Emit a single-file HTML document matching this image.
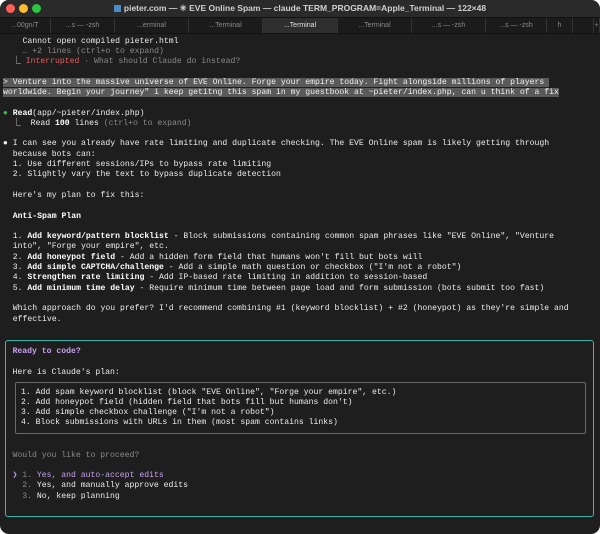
<!DOCTYPE html>
<html><head><style>
html,body{margin:0;padding:0;background:#fff;}
.win{position:absolute;left:0;top:0;width:600px;height:534px;background:#1e1e1e;border-radius:9px;overflow:hidden;}
.title{height:17px;background:#2a2a2a;color:#d0d0d0;font:600 8.5px "Liberation Sans",sans-serif;text-align:center;line-height:17px;position:relative;}
.dot{position:absolute;top:4px;width:9px;height:9px;border-radius:50%;}
.tabs{height:15px;background:#1b1b1b;border-top:1px solid #111;border-bottom:1px solid #111;display:flex;font:7px "Liberation Sans",sans-serif;color:#8a8a8a;}
.tabs div{border-right:1px solid #333;line-height:15px;text-align:center;}
.tabs .act{background:#2e2e2e;color:#e0e0e0;}
pre{margin:0;font-family:"Liberation Mono",monospace;font-size:8.15px;line-height:10.3px;color:#ececec;}
.main{position:absolute;left:3px;top:36.5px;}
b{font-weight:bold;color:#fff}
.g{color:#8a8a8a}.r{color:#e06060}.hl{background:#5a5a5a;color:#f0f0f0}
.gr{color:#3fb950}.p{color:#c8a0f0}
.box{position:absolute;left:5px;top:340px;width:587px;height:175px;border:1.5px solid #3ab8b0;border-radius:3px;}
.inner{position:absolute;left:8.5px;top:40.5px;width:569px;height:50px;border:1.5px solid #6a6a6a;border-radius:2px;}
</style></head><body>
<div class="win">
<div class="title"><span class="dot" style="left:6px;background:#fe5f57"></span><span class="dot" style="left:19px;background:#febc2e"></span><span class="dot" style="left:32px;background:#28c840"></span><span style="display:inline-block;width:7px;height:7px;background:#4a8ac8;vertical-align:-1px;margin-right:3px"></span>pieter.com — ✳ EVE Online Spam — claude TERM_PROGRAM=Apple_Terminal — 122×48</div>
<div class="tabs"><div style="width:50px">...00gn/T</div><div style="width:63px">...s — -zsh</div><div style="width:73px">...erminal</div><div style="width:73px">...Terminal</div><div class="act" style="width:74px">...Terminal</div><div style="width:73px">...Terminal</div><div style="width:73px">...s — -zsh</div><div style="width:60px">...s — -zsh</div><div style="width:25px">h</div><div style="width:20px"></div><div style="flex:1">+</div></div>
<pre class="main">    Cannot open compiled pieter.html
<span class="g">    … +2 lines (ctrl+o to expand)</span>
  ⎿ <span class="r">Interrupted</span><span class="g"> · What should Claude do instead?</span>

<span class="hl">&gt; Venture into the massive universe of EVE Online. Forge your empire today. Fight alongside millions of players </span>
<span class="hl">worldwide. Begin your journey" i keep getitng this spam in my guestbook at ~pieter/index.php, can u think of a fix</span>

<span class="gr">●</span> <b>Read</b>(app/~pieter/index.php)
  ⎿  Read <b>100</b> lines <span class="g">(ctrl+o to expand)</span>

● I can see you already have rate limiting and duplicate checking. The EVE Online spam is likely getting through
  because bots can:
  1. Use different sessions/IPs to bypass rate limiting
  2. Slightly vary the text to bypass duplicate detection

  Here's my plan to fix this:

  <b>Anti-Spam Plan</b>

  1. <b>Add keyword/pattern blocklist</b> - Block submissions containing common spam phrases like "EVE Online", "Venture
  into", "Forge your empire", etc.
  2. <b>Add honeypot field</b> - Add a hidden form field that humans won't fill but bots will
  3. <b>Add simple CAPTCHA/challenge</b> - Add a simple math question or checkbox ("I'm not a robot")
  4. <b>Strengthen rate limiting</b> - Add IP-based rate limiting in addition to session-based
  5. <b>Add minimum time delay</b> - Require minimum time between page load and form submission (bots submit too fast)

  Which approach do you prefer? I'd recommend combining #1 (keyword blocklist) + #2 (honeypot) as they're simple and
  effective.</pre>
<div class="box">
<pre style="position:absolute;left:6.5px;top:6px"><b style="color:#c8a0f0">Ready to code?</b>

Here is Claude's plan:</pre>
<div class="inner"><pre style="position:absolute;left:5.5px;top:5px">1. Add spam keyword blocklist (block "EVE Online", "Forge your empire", etc.)
2. Add honeypot field (hidden field that bots fill but humans don't)
3. Add simple checkbox challenge ("I'm not a robot")
4. Block submissions with URLs in them (most spam contains links)</pre></div>
<pre style="position:absolute;left:6.5px;top:109.5px"><span class="g">Would you like to proceed?</span>

<span class="p">❯ <span class="g">1.</span> Yes, and auto-accept edits</span>
  <span class="g">2.</span> Yes, and manually approve edits
  <span class="g">3.</span> No, keep planning</pre>
</div>
</div>
</body></html>
